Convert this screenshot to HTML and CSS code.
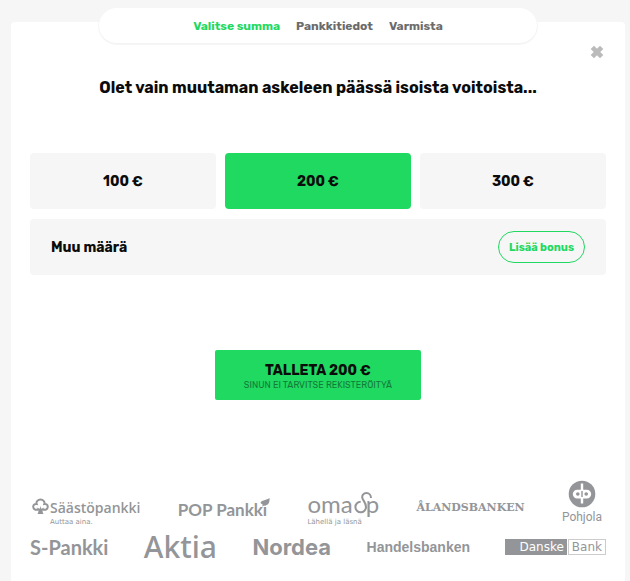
FILE: index.html
```html
<!DOCTYPE html>
<html lang="fi">
<head>
  <meta charset="UTF-8">
  <title>Talletus</title>
  <link rel="stylesheet" href="styles.css">
</head>
<body>
<nav class="steps">
  <a class="current" href="#summa">Valitse summa</a>
  <a href="#pankki">Pankkitiedot</a>
  <a href="#varmista">Varmista</a>
</nav>
<main class="panel">
  <button class="close" type="button" aria-label="Sulje">
    <svg width="12" height="12" viewBox="0 0 12 12"><path d="M2 2l8 8M10 2l-8 8"/></svg>
  </button>
  <h1>Olet vain muutaman askeleen päässä isoista voitoista...</h1>

  <div class="amounts">
    <button type="button">100 €</button>
    <button class="selected" type="button">200 €</button>
    <button type="button">300 €</button>
  </div>
  <div class="other">
    <input type="text" aria-label="Muu määrä" placeholder="Muu määrä">
    <button class="bonus" type="button">Lisää bonus</button>
  </div>

  <button class="deposit" type="button">
    <strong>TALLETA 200 €</strong>
    <small>SINUN EI TARVITSE REKISTERÖITYÄ</small>
  </button>

  <!-- pankit -->
  <div class="banks">
    <div class="row">
      <div class="bank saasto">
        <svg width="17" height="17" viewBox="0 0 17 17">
          <path class="line" d="M6 11.5C3.500 12.500 1.200 11 1.200 8.800C1.200 6.800 2.800 5.600 4.700 6C3.800 3.500 6 1.500 8.500 1.500S13.200 3.500 12.300 6C14.200 5.600 15.800 6.800 15.800 8.800C15.800 11 13.500 12.500 11 11.500"/>
          <path d="M5.500 16C7 13.500 6.600 12 4.600 9.600L7.800 10.800L8.500 8L9.200 10.800L12.400 9.600C10.400 12 10 13.500 11.500 16Z"/>
        </svg>
        <div><b>Säästöpankki</b><i>Auttaa aina.</i></div>
      </div>
      <div class="bank pop">
        <b>POP Pankki</b>
        <svg width="10" height="9" viewBox="0 0 10 9"><path d="M0.500 5C1.500 2 5 2.800 9.500 0C9.800 4 8.800 7.500 4.500 7.200L2 8.800L2.800 6.800Z"/></svg>
      </div>
      <div class="bank oma">
        <div class="word">
          <b>oma</b>
          <svg width="19" height="22" viewBox="0 0 19 22"><path class="line" d="M18 6C18 3 16 1 13.500 1C10.500 1 8.500 3.500 9.500 6.500C10.200 8.500 13 11 13 15A5.300 5.300 0 1 1 7.700 9.700"/></svg>
          <b>p</b>
        </div>
        <i>Lähellä ja läsnä</i>
      </div>
      <div class="bank aland"><b>ÅLANDSBANKEN</b></div>
      <div class="bank pohjola">
        <svg width="28" height="28" viewBox="0 0 28 28">
          <circle cx="14" cy="14" r="13.300"/>
          <path class="white" d="M12.800 3.500h2.400v6.200h3.600a4.400 4.400 0 0 1 0 8.800H15.200v5h-2.400v-5H9.200a4.400 4.400 0 0 1 0-8.800H12.800Z"/>
          <circle cx="9.800" cy="14" r="1.800"/><circle cx="18.200" cy="14" r="1.800"/>
          <path d="M13.300 11h1.400v6h-1.400z"/>
        </svg>
        <b>Pohjola</b>
      </div>
    </div>
    <div class="row second">
      <div class="bank spankki"><b>S-Pankki</b></div>
      <div class="bank aktia"><b>Aktia</b></div>
      <div class="bank nordea"><b>Nordea</b></div>
      <div class="bank handels"><b>Handelsbanken</b></div>
      <div class="bank danske"><b>Danske</b><i>Bank</i></div>
    </div>
  </div>
</main>
</body>
</html>
```

FILE: styles.css
```css
* {
  box-sizing: border-box;
}

body {
  margin: 0;
  padding: 8px 5px 0 11px;
  background: #f6f6f6;
  color: #0b0b0b;
  font-family: Rubik, Inter, "Liberation Sans", sans-serif;
}

button {
  border: 0;
  padding: 0;
  color: inherit;
  font-family: inherit;
  cursor: pointer;
}

.steps {
  position: relative;
  display: flex;
  justify-content: center;
  gap: 16px;
  width: 438px;
  max-width: 90%;
  height: 36px;
  margin: 0 auto -22px;
  border-bottom: 1px solid #f3f3f3;
  border-radius: 18px;
  background: #fff;
  box-shadow: 0 0 0 1px #f6f6f6;
  line-height: 36px;
  font-size: 12px;
  font-weight: 700;
}

.steps a {
  color: #6b6b6b;
  text-decoration: none;
}

.steps a.current {
  color: #1fd961;
}

.panel {
  display: flex;
  flex-direction: column;
  min-height: calc(100vh - 22px);
  padding: 23px 19px 0;
  border-radius: 4px 4px 0 0;
  background: #fff;
}

.close {
  align-self: flex-end;
  display: flex;
  margin-right: 2px;
  background: none;
}

.close svg {
  width: 14px;
  height: 14px;
  stroke: #bbb;
  stroke-width: 4;
}

h1 {
  margin: 19px 0 55px;
  text-align: center;
  font-size: 16px;
  line-height: 20px;
  font-weight: 700;
}

.amounts {
  display: grid;
  grid-template-columns: repeat(3, 1fr);
  gap: 9px;
}

.amounts button {
  height: 56px;
  border-radius: 4px;
  background: #f6f6f6;
  font-size: 14px;
  font-weight: 700;
}

.amounts .selected {
  background: #1fd961;
}

.other {
  display: flex;
  align-items: center;
  height: 56px;
  margin-top: 10px;
  padding: 0 21px;
  border-radius: 4px;
  background: #f6f6f6;
}

.other input {
  flex: 1;
  min-width: 0;
  padding: 0;
  border: 0;
  background: none;
  font: 700 14px Rubik, Inter, "Liberation Sans", sans-serif;
}

.other input::placeholder {
  color: #0b0b0b;
}

.other .bonus {
  width: 87px;
  height: 32px;
  border: 1px solid #1fd961;
  border-radius: 16px;
  background: none;
  color: #1fd961;
  font-size: 11px;
  font-weight: 700;
}

.deposit {
  align-self: center;
  width: 206px;
  height: 50px;
  margin-top: 75px;
  padding-top: 2px;
  border-radius: 2px;
  background: #1fd961;
}

.deposit strong,
.deposit small {
  display: block;
}

.deposit strong {
  font-size: 14px;
  line-height: 17px;
  font-weight: 700;
}

.deposit small {
  color: #137a38;
  font-size: 9px;
  line-height: 12px;
}

.banks {
  margin-top: 80px;
  color: #939598;
}

.row {
  display: flex;
  align-items: flex-end;
  justify-content: space-between;
  height: 46px;
  padding: 0 4px 0 2px;
}

.second {
  align-items: center;
  height: 42px;
  padding: 0;
}

.bank {
  display: flex;
  white-space: nowrap;
}

.bank b,
.bank i {
  display: block;
  font-style: normal;
  font-weight: 400;
}

.bank svg {
  fill: #939598;
}

.bank .line {
  fill: none;
  stroke: #939598;
  stroke-width: 2;
}

.bank .white {
  fill: #fff;
}

.saasto {
  gap: 1px;
}

.saasto b {
  font: 600 14px/20px "Open Sans", sans-serif;
}

.saasto i {
  font: 7px/8px "DejaVu Sans", sans-serif;
}

.pop {
  padding-bottom: 4px;
}

.pop b {
  font: 700 17px/24px Lato, sans-serif;
}

.pop svg {
  margin-left: -7px;
}

.oma {
  flex-direction: column;
}

.oma .word {
  display: flex;
  align-items: flex-end;
  padding-bottom: 4px;
}

.oma b {
  font: 24px/20px Lato, sans-serif;
}

.oma .word svg {
  margin-right: -6px;
}

.oma i {
  font: 7px/8px "DejaVu Sans", sans-serif;
}

.aland {
  padding-bottom: 10px;
}

.aland b {
  font: 700 11px/16px "DejaVu Serif", serif;
}

.pohjola {
  flex-direction: column;
  align-items: center;
}

.pohjola b {
  font: 12px/18px Roboto, sans-serif;
}

.spankki b {
  font: 700 20px/24px Lato, sans-serif;
}

.aktia b {
  font: 500 30px/32px "Noto Sans", sans-serif;
}

.nordea b {
  font: 700 22px/24px Inter, sans-serif;
}

.handels b {
  font: 700 14px/20px "Liberation Sans", sans-serif;
}

.danske {
  gap: 1px;
}

.danske b,
.danske i {
  font: 12px/14px "DejaVu Sans", sans-serif;
}

.danske b {
  padding: 1px 3px 1px 14px;
  background: #939598;
  color: #fff;
}

.danske i {
  padding: 0 3px;
  border: 1px solid #ccc;
}
```
